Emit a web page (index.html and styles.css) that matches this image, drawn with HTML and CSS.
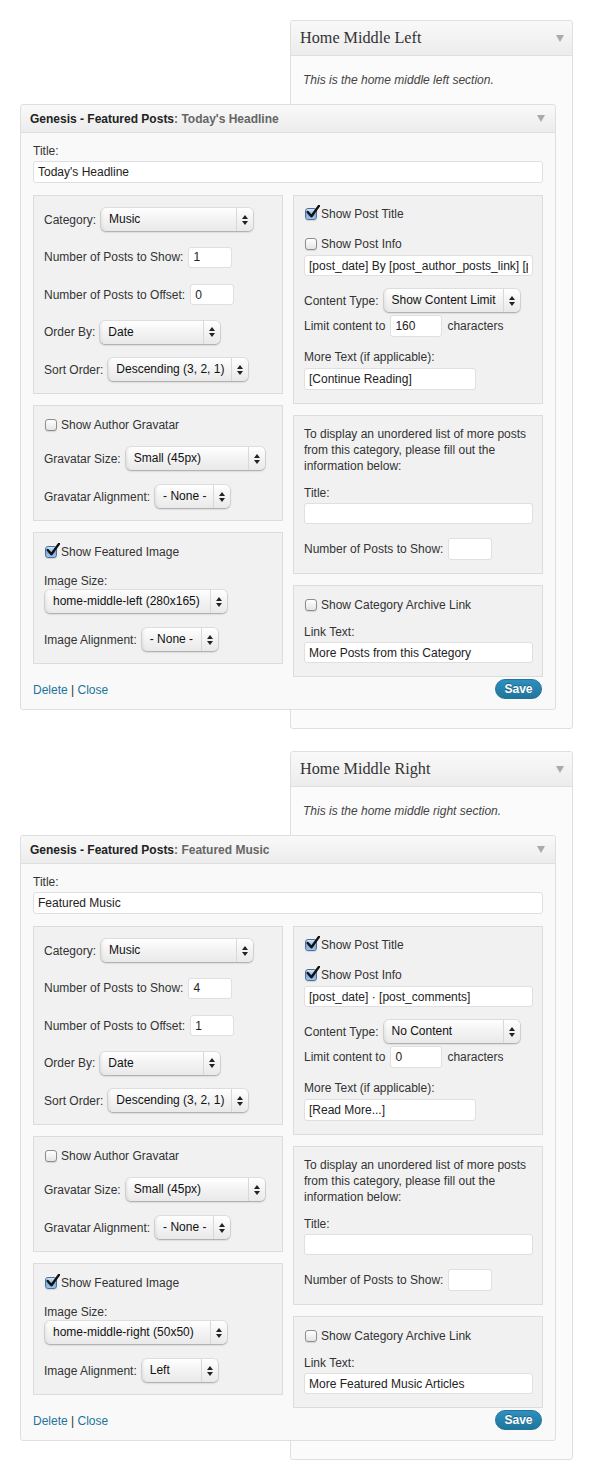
FILE: index.html
```html
<!DOCTYPE html>
<html>
<head>
<meta charset="utf-8">
<title>Widgets</title>
<link rel="stylesheet" href="styles.css">
</head>
<body>

<section class="sidebar">
  <div class="sidebar-head">
    <h3>Home Middle Left</h3>
    <svg class="toggle" width="8" height="7" viewBox="0 0 8 7"><polygon points="0,0 8,0 4,7" fill="#aaa"/></svg>
  </div>
  <div class="sidebar-body">
    <p class="sidebar-desc">This is the home middle left section.</p>
    <div class="widget">
      <div class="widget-head">
        <h4>Genesis - Featured Posts<span class="in-title">: Today's Headline</span></h4>
        <svg class="toggle" width="8" height="7" viewBox="0 0 8 7"><polygon points="0,0 8,0 4,7" fill="#aaa"/></svg>
      </div>
      <div class="widget-body">
        <div class="lbl">Title:</div>
        <input class="txt full mt2" type="text" value="Today's Headline">
        <div class="cols">
          <div class="col">
            <div class="box box-query">
              <div class="row">Category: <div class="select sel-cat"><span class="val">Music</span><span class="arr"><svg width="6" height="10" viewBox="0 0 6 10"><polygon points="0,4 3,0 6,4" fill="#222"/><polygon points="0,6 3,10 6,6" fill="#222"/></svg></span></div></div>
              <div class="row">Number of Posts to Show: <input class="txt num" type="text" value="1"></div>
              <div class="row">Number of Posts to Offset: <input class="txt num" type="text" value="0"></div>
              <div class="row">Order By: <div class="select sel-order"><span class="val">Date</span><span class="arr"><svg width="6" height="10" viewBox="0 0 6 10"><polygon points="0,4 3,0 6,4" fill="#222"/><polygon points="0,6 3,10 6,6" fill="#222"/></svg></span></div></div>
              <div class="row">Sort Order: <div class="select sel-sort"><span class="val">Descending (3, 2, 1)</span><span class="arr"><svg width="6" height="10" viewBox="0 0 6 10"><polygon points="0,4 3,0 6,4" fill="#222"/><polygon points="0,6 3,10 6,6" fill="#222"/></svg></span></div></div>
            </div>
            <div class="box box-grav">
              <div class="check"><span class="cb"></span>Show Author Gravatar</div>
              <div class="row mt14">Gravatar Size: <div class="select sel-gsize"><span class="val">Small (45px)</span><span class="arr"><svg width="6" height="10" viewBox="0 0 6 10"><polygon points="0,4 3,0 6,4" fill="#222"/><polygon points="0,6 3,10 6,6" fill="#222"/></svg></span></div></div>
              <div class="row mt15">Gravatar Alignment: <div class="select sel-galign"><span class="val">- None -</span><span class="arr"><svg width="6" height="10" viewBox="0 0 6 10"><polygon points="0,4 3,0 6,4" fill="#222"/><polygon points="0,6 3,10 6,6" fill="#222"/></svg></span></div></div>
            </div>
            <div class="box box-img">
              <div class="check"><span class="cb on"><svg viewBox="0 0 14 14"><path d="M2.5 6.5 L6 10.5 L13 0.8" fill="none" stroke="#111" stroke-width="2.3" stroke-linecap="round" stroke-linejoin="round"/></svg></span>Show Featured Image</div>
              <div class="lbl mt13">Image Size:</div>
              <div class="select sel-isize mt1"><span class="val">home-middle-left (280x165)</span><span class="arr"><svg width="6" height="10" viewBox="0 0 6 10"><polygon points="0,4 3,0 6,4" fill="#222"/><polygon points="0,6 3,10 6,6" fill="#222"/></svg></span></div>
              <div class="row mt15">Image Alignment: <div class="select sel-ialign"><span class="val">- None -</span><span class="arr"><svg width="6" height="10" viewBox="0 0 6 10"><polygon points="0,4 3,0 6,4" fill="#222"/><polygon points="0,6 3,10 6,6" fill="#222"/></svg></span></div></div>
            </div>
          </div>
          <div class="col">
            <div class="box box-post">
              <div class="check"><span class="cb on"><svg viewBox="0 0 14 14"><path d="M2.5 6.5 L6 10.5 L13 0.8" fill="none" stroke="#111" stroke-width="2.3" stroke-linecap="round" stroke-linejoin="round"/></svg></span>Show Post Title</div>
              <div class="check mt14"><span class="cb"></span>Show Post Info</div>
              <input class="txt full mt3" type="text" value="[post_date] By [post_author_posts_link] [post_comments] [post_edit]">
              <div class="row mt13">Content Type: <div class="select sel-ctype"><span class="val">Show Content Limit</span><span class="arr"><svg width="6" height="10" viewBox="0 0 6 10"><polygon points="0,4 3,0 6,4" fill="#222"/><polygon points="0,6 3,10 6,6" fill="#222"/></svg></span></div></div>
              <div class="row row-limit mt3">Limit content to <input class="txt num-wide" type="text" value="160"> characters</div>
              <div class="lbl mt12">More Text (if applicable):</div>
              <input class="txt more mt3" type="text" value="[Continue Reading]">
            </div>
            <div class="box box-extra">
              <p class="extra-text">To display an unordered list of more posts<br>from this category, please fill out the<br>information below:</p>
              <div class="lbl mt11">Title:</div>
              <input class="txt full mt2" type="text" value="">
              <div class="row row-tall mt14">Number of Posts to Show: <input class="txt num num-tall" type="text" value=""></div>
            </div>
            <div class="box box-archive">
              <div class="check"><span class="cb"></span>Show Category Archive Link</div>
              <div class="lbl mt11">Link Text:</div>
              <input class="txt full mt2" type="text" value="More Posts from this Category">
            </div>
          </div>
        </div>
        <div class="actions">
          <div class="links"><a href="#">Delete</a> | <a href="#">Close</a></div>
          <button class="save" type="button">Save</button>
        </div>
      </div>
    </div>
  </div>
</section>

<section class="sidebar">
  <div class="sidebar-head">
    <h3>Home Middle Right</h3>
    <svg class="toggle" width="8" height="7" viewBox="0 0 8 7"><polygon points="0,0 8,0 4,7" fill="#aaa"/></svg>
  </div>
  <div class="sidebar-body">
    <p class="sidebar-desc">This is the home middle right section.</p>
    <div class="widget">
      <div class="widget-head">
        <h4>Genesis - Featured Posts<span class="in-title">: Featured Music</span></h4>
        <svg class="toggle" width="8" height="7" viewBox="0 0 8 7"><polygon points="0,0 8,0 4,7" fill="#aaa"/></svg>
      </div>
      <div class="widget-body">
        <div class="lbl">Title:</div>
        <input class="txt full mt2" type="text" value="Featured Music">
        <div class="cols">
          <div class="col">
            <div class="box box-query">
              <div class="row">Category: <div class="select sel-cat"><span class="val">Music</span><span class="arr"><svg width="6" height="10" viewBox="0 0 6 10"><polygon points="0,4 3,0 6,4" fill="#222"/><polygon points="0,6 3,10 6,6" fill="#222"/></svg></span></div></div>
              <div class="row">Number of Posts to Show: <input class="txt num" type="text" value="4"></div>
              <div class="row">Number of Posts to Offset: <input class="txt num" type="text" value="1"></div>
              <div class="row">Order By: <div class="select sel-order"><span class="val">Date</span><span class="arr"><svg width="6" height="10" viewBox="0 0 6 10"><polygon points="0,4 3,0 6,4" fill="#222"/><polygon points="0,6 3,10 6,6" fill="#222"/></svg></span></div></div>
              <div class="row">Sort Order: <div class="select sel-sort"><span class="val">Descending (3, 2, 1)</span><span class="arr"><svg width="6" height="10" viewBox="0 0 6 10"><polygon points="0,4 3,0 6,4" fill="#222"/><polygon points="0,6 3,10 6,6" fill="#222"/></svg></span></div></div>
            </div>
            <div class="box box-grav">
              <div class="check"><span class="cb"></span>Show Author Gravatar</div>
              <div class="row mt14">Gravatar Size: <div class="select sel-gsize"><span class="val">Small (45px)</span><span class="arr"><svg width="6" height="10" viewBox="0 0 6 10"><polygon points="0,4 3,0 6,4" fill="#222"/><polygon points="0,6 3,10 6,6" fill="#222"/></svg></span></div></div>
              <div class="row mt15">Gravatar Alignment: <div class="select sel-galign"><span class="val">- None -</span><span class="arr"><svg width="6" height="10" viewBox="0 0 6 10"><polygon points="0,4 3,0 6,4" fill="#222"/><polygon points="0,6 3,10 6,6" fill="#222"/></svg></span></div></div>
            </div>
            <div class="box box-img">
              <div class="check"><span class="cb on"><svg viewBox="0 0 14 14"><path d="M2.5 6.5 L6 10.5 L13 0.8" fill="none" stroke="#111" stroke-width="2.3" stroke-linecap="round" stroke-linejoin="round"/></svg></span>Show Featured Image</div>
              <div class="lbl mt13">Image Size:</div>
              <div class="select sel-isize mt1"><span class="val">home-middle-right (50x50)</span><span class="arr"><svg width="6" height="10" viewBox="0 0 6 10"><polygon points="0,4 3,0 6,4" fill="#222"/><polygon points="0,6 3,10 6,6" fill="#222"/></svg></span></div>
              <div class="row mt15">Image Alignment: <div class="select sel-ialign"><span class="val">Left</span><span class="arr"><svg width="6" height="10" viewBox="0 0 6 10"><polygon points="0,4 3,0 6,4" fill="#222"/><polygon points="0,6 3,10 6,6" fill="#222"/></svg></span></div></div>
            </div>
          </div>
          <div class="col">
            <div class="box box-post">
              <div class="check"><span class="cb on"><svg viewBox="0 0 14 14"><path d="M2.5 6.5 L6 10.5 L13 0.8" fill="none" stroke="#111" stroke-width="2.3" stroke-linecap="round" stroke-linejoin="round"/></svg></span>Show Post Title</div>
              <div class="check mt14"><span class="cb on"><svg viewBox="0 0 14 14"><path d="M2.5 6.5 L6 10.5 L13 0.8" fill="none" stroke="#111" stroke-width="2.3" stroke-linecap="round" stroke-linejoin="round"/></svg></span>Show Post Info</div>
              <input class="txt full mt3" type="text" value="[post_date] · [post_comments]">
              <div class="row mt13">Content Type: <div class="select sel-ctype"><span class="val">No Content</span><span class="arr"><svg width="6" height="10" viewBox="0 0 6 10"><polygon points="0,4 3,0 6,4" fill="#222"/><polygon points="0,6 3,10 6,6" fill="#222"/></svg></span></div></div>
              <div class="row row-limit mt3">Limit content to <input class="txt num-wide" type="text" value="0"> characters</div>
              <div class="lbl mt12">More Text (if applicable):</div>
              <input class="txt more mt3" type="text" value="[Read More...]">
            </div>
            <div class="box box-extra">
              <p class="extra-text">To display an unordered list of more posts<br>from this category, please fill out the<br>information below:</p>
              <div class="lbl mt11">Title:</div>
              <input class="txt full mt2" type="text" value="">
              <div class="row row-tall mt14">Number of Posts to Show: <input class="txt num num-tall" type="text" value=""></div>
            </div>
            <div class="box box-archive">
              <div class="check"><span class="cb"></span>Show Category Archive Link</div>
              <div class="lbl mt11">Link Text:</div>
              <input class="txt full mt2" type="text" value="More Featured Music Articles">
            </div>
          </div>
        </div>
        <div class="actions">
          <div class="links"><a href="#">Delete</a> | <a href="#">Close</a></div>
          <button class="save" type="button">Save</button>
        </div>
      </div>
    </div>
  </div>
</section>

</body>
</html>
```

FILE: styles.css
```css
* { box-sizing: border-box; }

body {
  margin: 0;
  background: #fff;
  font-family: "Liberation Sans", Arial, sans-serif;
  font-size: 12px;
  color: #333;
  padding: 20px 0 0;
}

/* ---------- sidebar box ---------- */
.sidebar {
  margin: 0 21px 22px 290px;
  border: 1px solid #dfdfdf;
  border-radius: 3px;
  background: #fbfbfb;
}

.sidebar-head {
  height: 35px;
  border-bottom: 1px solid #dfdfdf;
  background: linear-gradient(#f9f9f9, #ececec);
  display: flex;
  align-items: center;
  justify-content: space-between;
  padding: 0 8px 0 9px;
  border-radius: 3px 3px 0 0;
}

.sidebar-head h3 {
  margin: 0;
  font-family: "Liberation Serif", "Times New Roman", serif;
  font-weight: normal;
  font-size: 16.2px;
  color: #333;
}

.sidebar-body {
  padding: 16px 16px 18px 12px;
}

.sidebar-desc {
  margin: 0 0 16px;
  font-style: italic;
  line-height: 16px;
  color: #444;
}

/* ---------- widget ---------- */
.widget {
  margin-left: -283px;
  border: 1px solid #dfdfdf;
  border-radius: 3px;
  background: #f9f9f9;
}

.widget-head {
  height: 28px;
  border-bottom: 1px solid #dfdfdf;
  background: linear-gradient(#f9f9f9, #ececec);
  display: flex;
  align-items: center;
  justify-content: space-between;
  padding: 0 10px 0 9px;
  border-radius: 3px 3px 0 0;
}

.widget-head h4 {
  margin: 0;
  font-size: 12px;
  font-weight: bold;
  color: #222;
}

.in-title {
  color: #666;
}

.widget-body {
  padding: 10px 12px 10px;
}

.lbl {
  line-height: 16px;
  height: 16px;
}

/* ---------- inputs ---------- */
.txt {
  display: block;
  height: 21px;
  border: 1px solid #dfdfdf;
  border-radius: 3px;
  background: #fff;
  font-family: "Liberation Sans", Arial, sans-serif;
  font-size: 12px;
  color: #222;
  padding: 0 4px;
  margin: 0;
  outline: none;
}

.full { width: 100%; height: 22px; }
.box .full { height: 21px; }
.num { width: 44px; }
.num-tall { height: 22px; }
.num-wide { width: 52px; height: 22px; }
.more { width: 172px; height: 22px; }

/* ---------- columns ---------- */
.cols {
  display: grid;
  grid-template-columns: 1fr 1fr;
  column-gap: 10px;
  margin-top: 12px;
  align-items: start;
}

.col {
  display: flex;
  flex-direction: column;
  gap: 11px;
}

.box {
  background: #f1f1f1;
  border: 1px solid #dcdcdc;
  display: flex;
  flex-direction: column;
  padding: 10px 9px 13px 10px;
}

.box-query { padding-top: 12px; padding-bottom: 12px; gap: 14.5px; }
.box-grav { padding-top: 11px; padding-bottom: 12px; }
.box-img { padding-top: 11px; padding-bottom: 12px; }
.box-post { padding-top: 10px; }
.box-extra { padding-top: 10px; }
.box-archive { padding-top: 11px; }

.row {
  display: flex;
  align-items: center;
  gap: 5px;
  height: 23px;
  white-space: nowrap;
}

.row-limit { height: 22px; }
.row-tall { height: 22px; }

.check {
  display: flex;
  align-items: center;
  height: 16px;
  gap: 4px;
  white-space: nowrap;
}

.cb {
  position: relative;
  width: 12px;
  height: 12px;
  margin-left: 1px;
  border: 1px solid #8d8d8d;
  border-radius: 3px;
  background: linear-gradient(#ffffff, #e4e4e4);
  box-shadow: 0 1px 1px rgba(0, 0, 0, 0.12);
  flex: none;
}

.cb.on {
  border-color: #4f6f99;
  background: linear-gradient(#d3e6f8, #7eb0e3 55%, #9cc6ef);
}

.cb svg {
  position: absolute;
  left: -1px;
  top: -4px;
  width: 15px;
  height: 15px;
}

.extra-text {
  margin: 0;
  line-height: 16px;
  white-space: nowrap;
}

/* ---------- select (aqua style) ---------- */
.select {
  display: flex;
  height: 23px;
  border-radius: 5px;
  background: linear-gradient(#ffffff, #f4f4f4 45%, #e9e9e9);
  box-shadow: 0 0 0 1px rgba(0, 0, 0, 0.07), 0 1px 2px rgba(0, 0, 0, 0.28), inset 3px 0 3px -2px rgba(0, 0, 0, 0.08);
  color: #111;
  flex: none;
}

.select .val {
  flex: 1;
  padding-left: 8px;
  line-height: 22px;
  white-space: nowrap;
  overflow: hidden;
}

.select .arr {
  width: 17px;
  border-left: 1px solid #d8d8d8;
  display: flex;
  align-items: center;
  justify-content: center;
}

.sel-cat { width: 152px; }
.sel-order { width: 120px; }
.sel-sort { width: 140px; }
.sel-gsize { width: 139px; }
.sel-galign { width: 75px; }
.sel-isize { width: 182px; margin-left: 1px; }
.sel-ialign { width: 76px; }
.sel-ctype { width: 136px; }

/* ---------- spacing helpers ---------- */
.mt1 { margin-top: 1px; }
.mt2 { margin-top: 2px; }
.mt3 { margin-top: 3px; }
.mt11 { margin-top: 11px; }
.mt12 { margin-top: 12px; }
.mt13 { margin-top: 13px; }
.mt14 { margin-top: 14px; }
.mt15 { margin-top: 15px; }

/* ---------- actions ---------- */
.actions {
  display: flex;
  justify-content: space-between;
  align-items: center;
  margin-top: 2px;
  height: 20px;
}

.links {
  color: #333;
  padding-top: 2px;
}

.links a {
  color: #21759b;
  text-decoration: none;
}

.save {
  width: 47px;
  height: 20px;
  margin: 0;
  padding: 0;
  border: 1px solid #21759b;
  border-radius: 10px;
  background: linear-gradient(#2e8fbf, #21759b);
  color: #fff;
  font-family: "Liberation Sans", Arial, sans-serif;
  font-size: 12px;
  font-weight: bold;
  text-shadow: 0 -1px 0 rgba(0, 0, 0, 0.3);
  margin-right: 1px;
}
```
